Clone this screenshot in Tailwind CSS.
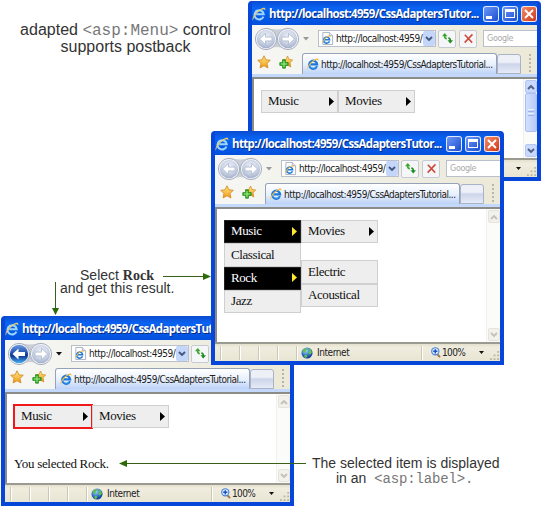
<!DOCTYPE html>
<html lang="en">
<head>
<meta charset="utf-8">
<title>Adapted menu postback</title>
<script src="https://cdn.jsdelivr.net/npm/@tailwindcss/browser@4"></script>
</head>
<body class="bg-white">
<svg class="absolute size-0" aria-hidden="true">
  <defs>
    <radialGradient id="orb" cx=".5" cy=".35" r=".65"><stop offset="0" stop-color="#e9edf5"/><stop offset=".6" stop-color="#ccd5e6"/><stop offset="1" stop-color="#a3b0ca"/></radialGradient>
    <linearGradient id="orbBlue" x2="0" y2="1"><stop offset="0" stop-color="#6f9be0"/><stop offset=".45" stop-color="#1c4fae"/><stop offset=".6" stop-color="#0b3790"/><stop offset="1" stop-color="#49b0f5"/></linearGradient>
    <linearGradient id="gold" x2="0" y2="1"><stop offset="0" stop-color="#ffe98a"/><stop offset="1" stop-color="#f39a14"/></linearGradient>
    <radialGradient id="earth" cx=".4" cy=".3" r=".7"><stop offset="0" stop-color="#a9d4ff"/><stop offset=".6" stop-color="#2e6fd0"/><stop offset="1" stop-color="#123c8c"/></radialGradient>
    <symbol id="ie" viewBox="0 0 14 14">
      <path d="M11.600 9.600A4.700 4.700 0 1 1 11.900 7.400H4.200" fill="none" stroke="#1f78d8" stroke-width="2.500"/>
      <path d="M10.800 9.900A4.300 4.300 0 0 1 3 8.400" fill="none" stroke="#58b7f4" stroke-width=".8"/>
      <path d="M1 13.600C-1.300 11 5 3 10.600 .9c2.600-.9 3.200.8 2.400 2.700C12.800 1.800 10 1.800 6.900 4.500 3.600 7.300 1 11 1 13.600z" fill="#f4bd3c"/>
    </symbol>
    <symbol id="ieWhite" viewBox="0 0 14 14">
      <path d="M11.400 9.600A4.600 4.600 0 1 1 11.700 7.300H4.200" fill="none" stroke="#9bd6ff" stroke-width="2.100"/>
      <path d="M1 13.600C-1.300 11 5 3 10.600 .9c2.600-.9 3.200.8 2.400 2.700C12.800 1.800 10 1.800 6.900 4.500 3.600 7.300 1 11 1 13.600z" fill="#f6cf5e"/>
    </symbol>
    <symbol id="arrowLeft" viewBox="0 0 22 22"><path d="M4.500 11l6-5.500v3.600h6.500v3.800h-6.500v3.600z"/></symbol>
    <symbol id="star" viewBox="0 0 14 14"><path d="M7 .8l1.900 4 4.400.5-3.300 3 .9 4.600L7 10.700l-3.900 2.200.9-4.600-3.300-3 4.400-.5z" fill="url(#gold)" stroke="#d08418" stroke-width=".8"/></symbol>
    <symbol id="starPlus" viewBox="0 0 14 14">
      <path d="M8.500 1l1.600 3.500 3.600.5-2.700 2.600.8 4.400-3.300-2-3.800 2 .8-4.400L3 5l4-.5z" fill="url(#gold)" stroke="#d08418" stroke-width=".7"/>
      <path d="M3.600 4.800h2.800v2.800h2.800v2.800H6.400v2.800H3.600v-2.800H.8V7.600h2.800z" fill="#3cb82c" stroke="#15801a" stroke-width=".7"/><path d="M5 6v6M2 9h6" stroke="#b5f09b" stroke-width=".8"/>
    </symbol>
    <symbol id="page" viewBox="0 0 14 16"><path d="M2 1.500h7l3.500 3.500v9.500H2z" fill="#fff" stroke="#a9b0bd"/><path d="M9 1.500v3.500h3.500" fill="#e6e9ef" stroke="#a9b0bd"/></symbol>
    <symbol id="refresh" viewBox="0 0 12 12"><path d="M3 1.500v2.300C3 5.200 3.700 6 5.200 6.200" fill="none" stroke="#3da52f" stroke-width="1.800"/><path d="M3 0l3 3.500H0z" fill="#3da52f"/><path d="M9 10V7.800C9 6.400 8.300 5.600 6.900 5.400" fill="none" stroke="#1f8d22" stroke-width="1.800"/><path d="M9 11.500L6 8h6z" fill="#1f8d22"/></symbol>
    <symbol id="stop" viewBox="0 0 12 12"><path d="M2 2l8 8.500M10.300 1.500L1.800 10.500" stroke="#d04a3c" stroke-width="1.700" fill="none"/></symbol>
    <symbol id="chev" viewBox="0 0 8 6"><path d="M1 1l3 3 3-3" fill="none" stroke="currentColor" stroke-width="1.900"/></symbol>
    <symbol id="globe" viewBox="0 0 13 13"><circle cx="6.500" cy="6.500" r="6" fill="url(#earth)"/><path d="M2.500 2.500l3-1.500 1.200 1.200L5.300 4l-1 2.300L2 6zM8 1.300l3 1.800.8 3-2.300 2.400L7.800 6.500l1.300-2zM4 8l2.300.6.5 1.600-1.500 1.700L3.500 11z" fill="#62c04b"/></symbol>
    <symbol id="mag" viewBox="0 0 10 11"><path d="M6 6.800l3 3.300" stroke="#a37646" stroke-width="2"/><circle cx="4.300" cy="4.300" r="3.600" fill="#dcecff" stroke="#4a82d4" stroke-width="1.100"/><path d="M4.300 2.200v4.200M2.200 4.300h4.200" stroke="#1654bd" stroke-width="1.400"/></symbol>
    <symbol id="grip" viewBox="0 0 11 11"><path d="M8 1h2v2H8zM8 5h2v2H8zM8 9h2v2H8zM4 5h2v2H4zM4 9h2v2H4zM0 9h2v2H0z" fill="#b9b5a2"/></symbol>
  </defs>
</svg>

<main id="desk" class="relative h-[506px] w-[543px] overflow-hidden bg-white font-['Liberation_Sans',sans-serif] text-[#333]">
  <h1 class="absolute left-0 top-[22px] w-[251px] text-center text-[16px] leading-[16px]">adapted <span class="font-['Liberation_Mono',monospace] text-[#777]">&lt;asp:Menu&gt;</span> control<br>supports postback</h1>
</main>

<script>
const scrollButton = (down, live) => `
  <div class="flex h-[13px] w-[12px] items-center justify-center rounded-[2px] border ${live ? 'border-[#b5c8f2] bg-[#c9d8fc] text-[#4d6185]' : 'border-[#e5e4dc] bg-[#f2f1ec] text-[#c3c2ba]'}">
    <svg class="h-[6px] w-[8px] shrink-0 ${down ? '' : 'rotate-180'}"><use href="#chev"/></svg>
  </div>`;

const titleButton = (shape, color) => `
  <div class="flex size-[16px] items-center justify-center rounded-[3px] border border-white/85 ${color}">${shape}</div>`;

const item = (label, arrow, on, extra = '') => `
  <div class="flex h-[23.250px] items-center justify-between border pb-px pl-[6px] pr-[3px] font-['Liberation_Serif',serif] text-[13px] tracking-[-0.4px] ${on ? 'border-[#222] bg-black text-white' : 'border-[#cfcfcf] bg-[#eee] text-[#111]'} ${extra || 'w-[77px]'}">
    <span>${label}</span>${arrow ? `<svg viewBox="0 0 5 9" class="h-[9px] w-[5px]"><path d="M0 0L5 4.500 0 9z" fill="${on ? '#ffe92e' : '#000'}"/></svg>` : ''}
  </div>`;

const browser = ({ place, height, visited, live, body }) => `
<section class="absolute ${place} flex w-[293px] flex-col overflow-hidden rounded-t-[4px] border-x-4 border-b-4 border-[#0646d8] bg-[#0646d8]" style="height:${height}px">
  <header class="-mx-1 flex h-[24px] shrink-0 items-center bg-linear-to-b from-[#0a4bd0] via-[#0a63f2] via-30% to-[#0350dd] pl-[4px] pr-[4px] pt-px">
    <svg class="size-[14px] shrink-0"><use href="#ieWhite"/></svg>
    <span class="ml-[3px] w-[212px] whitespace-nowrap font-['Open_Sans',sans-serif] text-[11.500px] font-bold tracking-[-0.66px] text-white [text-shadow:1px_1px_0_#0a2c80]">http://localhost:4959/CssAdaptersTutor...</span>
    <div class="ml-auto flex gap-[3px]">
      ${titleButton('<i class="mr-[4px] mt-[7px] h-[3px] w-[6px] bg-white"></i>', 'bg-linear-to-br from-[#6d96f4] to-[#1c4bd3]')}
      ${titleButton('<i class="h-[9px] w-[10px] border border-t-[3px] border-white"></i>', 'bg-linear-to-br from-[#6d96f4] to-[#1c4bd3]')}
      ${titleButton('<svg viewBox="0 0 10 10" class="size-[10px]"><path d="M1 1l8 8M9 1L1 9" stroke="#fff" stroke-width="1.900"/></svg>', 'bg-linear-to-br from-[#f08a68] to-[#cf3410]')}
    </div>
  </header>
  <nav class="flex h-[27px] shrink-0 items-center bg-linear-to-r from-[#f6f7f5] to-[#ece9d8] pl-[2px]">
    <svg viewBox="0 0 46 24" class="h-[24px] w-[46px] shrink-0">
      <path d="M12 .8Q23 4 34 .8V23Q23 17 12 23z" fill="#c9ced8"/>
      <circle cx="12" cy="12" r="10.600" fill="#f4f6fa" stroke="#a8afbc"/><circle cx="12" cy="12" r="9.200" fill="${visited ? 'url(#orbBlue)' : 'url(#orb)'}"/>
      <circle cx="34" cy="12" r="10.600" fill="#f4f6fa" stroke="#a8afbc"/><circle cx="34" cy="12" r="9.200" fill="url(#orb)"/>
      <use href="#arrowLeft" x="1" y="1" width="22" height="22" fill="#fff" stroke="${visited ? 'none' : '#a3b0c8'}" stroke-width=".7"/>
      <use href="#arrowLeft" x="-45" y="1" width="22" height="22" fill="#fff" stroke="#a3b0c8" stroke-width=".7" transform="scale(-1 1)"/>
    </svg>
    <svg viewBox="0 0 6 4" class="ml-[3px] h-[4px] w-[6px] shrink-0"><path d="M0 0h6L3 3.500z" fill="${visited ? '#111' : '#999'}"/></svg>
    <div class="ml-[9px] flex h-[17px] w-[118px] shrink-0 items-center border border-[#b9c0cc] bg-white">
      <span class="relative ml-[2px] h-[15px] w-[13px] shrink-0"><svg class="h-[15px] w-[13px]"><use href="#page"/></svg><svg class="absolute left-px top-[4px] size-[9px]"><use href="#ie"/></svg></span>
      <span class="ml-[2px] w-[87px] shrink-0 whitespace-nowrap font-['DejaVu_Sans_Condensed','DejaVu_Sans',sans-serif] text-[10px] tracking-[-0.48px] text-[#222]">http://localhost:4959/</span>
      <span class="flex h-[15px] w-[12px] shrink-0 items-center justify-center rounded-[2px] bg-[#c5d6fb] text-[#42587f]"><svg class="h-[6px] w-[8px]"><use href="#chev"/></svg></span>
    </div>
    <span class="ml-[2px] flex h-[18px] w-[18px] shrink-0 items-center justify-center rounded-[2px] border border-[#c6cbd3] bg-[#f5f6f7]"><svg class="size-[11px]"><use href="#refresh"/></svg></span>
    <span class="ml-[3px] flex h-[18px] w-[18px] shrink-0 items-center justify-center rounded-[2px] border border-[#c6cbd3] bg-[#f5f6f7]"><svg class="size-[11px]"><use href="#stop"/></svg></span>
    <span class="ml-[6px] flex h-[17px] flex-1 items-center border border-r-0 border-[#b9c0cc] bg-white pl-[3px] font-['DejaVu_Sans_Condensed','DejaVu_Sans',sans-serif] text-[9px] tracking-[-0.4px] text-[#aaa]">Google</span>
  </nav>
  <div class="flex h-[22px] shrink-0 bg-linear-to-r from-[#f6f7f5] to-[#ece9d8] pl-[5px]">
    <svg class="mt-[3px] size-[14px] shrink-0"><use href="#star"/></svg>
    <svg class="ml-[8px] mt-[3px] size-[14px] shrink-0"><use href="#starPlus"/></svg>
    <div class="ml-[9px] mt-px flex w-[195px] shrink-0 items-center rounded-t-[3px] border border-b-0 border-[#96a2b8] bg-linear-to-b from-white via-[#e9f1fd] to-[#bdd3f8] pl-[4px]">
      <svg class="size-[12px] shrink-0"><use href="#ie"/></svg>
      <span class="ml-[2px] whitespace-nowrap font-['DejaVu_Sans_Condensed','DejaVu_Sans',sans-serif] text-[10px] tracking-[-0.52px] text-[#222]">http://localhost:4959/CssAdaptersTutorial...</span>
    </div>
    <div class="mt-[2px] h-[20px] w-[24px] shrink-0 rounded-t-[3px] border border-[#a9b3c5] bg-linear-to-b from-[#eef0f8] from-40% via-[#ccd5ea] via-50% to-[#e6ebf7]"></div>
    <div class="ml-[8px] mt-[2px] h-[18px] w-0 border-l-2 border-dotted border-[#b8b6ac]"></div>
  </div>
  <div class="h-[5px] shrink-0 border-b-2 border-[#8b8b88] bg-[#c3d8fb]"></div>
  <div class="flex min-h-0 flex-1 border-l-2 border-[#8b8b88] bg-white">
    <div class="flex-1 pl-[7px] pt-[11px]">${body}</div>
    <div class="flex w-[14px] flex-col items-center border-l border-[#f0f0ec] bg-[#fbfbf9] py-px">
      ${scrollButton(false, live)}
      ${live ? '<div class="flex h-[39px] w-[12px] flex-col items-center justify-center gap-px rounded-[2px] border border-[#a9c0f0] bg-linear-to-r from-[#d3e0fd] to-[#b7cbf8]"><i class="h-px w-[6px] bg-[#e9f0ff]"></i><i class="h-px w-[6px] bg-[#9bb3e6]"></i><i class="h-px w-[6px] bg-[#e9f0ff]"></i><i class="h-px w-[6px] bg-[#9bb3e6]"></i></div>' : ''}
      <div class="mt-auto">${scrollButton(true, live)}</div>
    </div>
  </div>
  <footer class="flex h-[19px] shrink-0 items-center border-t-2 border-[#9b9a90] bg-linear-to-b from-[#e4e0cd] via-[#f0eddf] via-20% to-[#e9e5d3] pl-[5px] font-['DejaVu_Sans_Condensed','DejaVu_Sans',sans-serif] text-[10px] tracking-[-0.4px] text-[#222]">
    ${'<i class="mr-[17px] h-[14px] w-[2px] shrink-0 border-l border-r border-l-[#cbc7b5] border-r-white"></i>'.repeat(4)}
    <i class="h-[14px] w-[2px] shrink-0 border-l border-r border-l-[#cbc7b5] border-r-white"></i>
    <svg class="ml-[3px] size-[12px] shrink-0"><use href="#globe"/></svg>
    <span class="ml-[4px] w-[104px] tracking-[-0.42px]">Internet</span>
    <i class="h-[14px] w-[2px] shrink-0 border-l border-r border-l-[#cbc7b5] border-r-white"></i>
    <svg class="ml-[8px] h-[11px] w-[10px] shrink-0"><use href="#mag"/></svg>
    <span class="ml-px w-[37px] tracking-[-0.6px]">100%</span>
    <svg viewBox="0 0 5 3" class="h-[3px] w-[5px] shrink-0"><path d="M0 0h5L2.500 3z" fill="#111"/></svg>
    <svg class="ml-auto mt-[4px] size-[10px] shrink-0"><use href="#grip"/></svg>
  </footer>
</section>`;

const bar = (on, extra) => `<div class="flex">${item('Music', true, on, extra)}${item('Movies', true, false)}</div>`;

document.getElementById('desk').insertAdjacentHTML('beforeend',
  browser({ place: 'left-[248px] top-[1px]', height: 180, live: true, body: bar(false) }) +
  browser({ place: 'left-px top-[316px]', height: 190, visited: true,
    body: bar(false, 'w-[78px] outline-2 -outline-offset-1 outline-[#f01818]') + `<p class="mt-[26px] font-['Liberation_Serif',serif] text-[13px] tracking-[-0.3px] text-[#111]">You selected Rock.</p>` }) +
  browser({ place: 'left-[211px] top-[131px]', height: 234,
    body: bar(true) + `<div class="flex items-start"><div>${item('Classical')}${item('Rock', true, true)}${item('Jazz')}</div><div class="mt-[17px]">${item('Electric')}${item('Acoustical')}</div></div>` }) + `
  <p class="absolute left-[60px] top-[269px] w-[114px] whitespace-nowrap text-center text-[14px] leading-[13px]">Select <b class="font-['Liberation_Serif',serif]">Rock</b><br>and get this result.</p>
  <p class="absolute left-[312px] top-[456px] whitespace-nowrap text-[14px] leading-[15px]">The selected item is displayed<br><span class="pl-[24px]">in an <span class="ml-[4px] font-['Liberation_Mono',monospace] tracking-[-0.15px] text-[#777]">&lt;asp:label&gt;.</span></span></p>
  <svg viewBox="0 0 543 506" class="pointer-events-none absolute left-0 top-0 h-[506px] w-[543px]">
    <path d="M163 276.500H205M55.500 282V309M125 463.500H306" stroke="#376018" fill="none"/>
    <path d="M203 273l8 3.500-8 3.500zM52 308h7l-3.500 7zM127 460l-8 3.500 8 3.500z" fill="#2c6a08"/>
  </svg>`);
</script>
</body>
</html>
